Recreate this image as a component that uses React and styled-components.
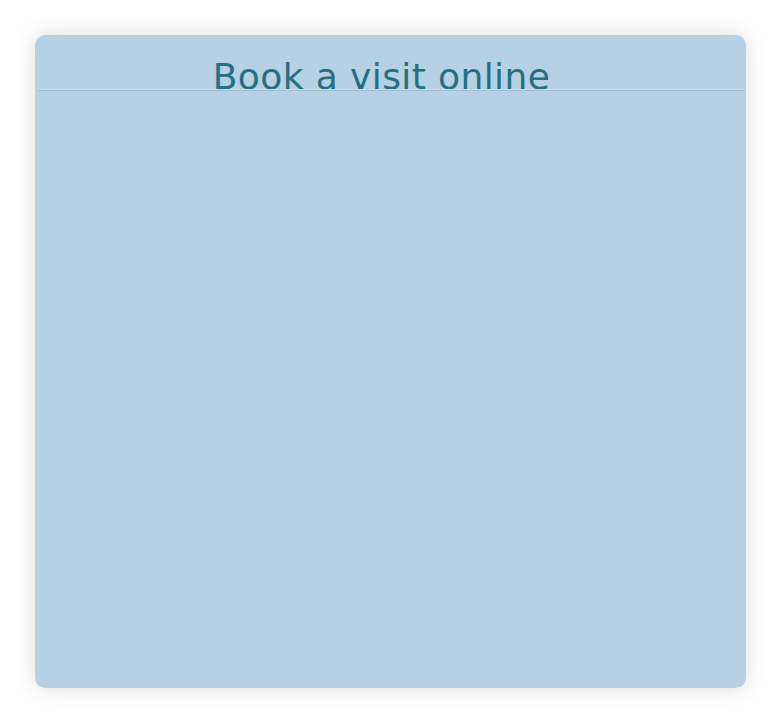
import React from "react";
import styled, { createGlobalStyle } from "styled-components";

const GlobalStyle = createGlobalStyle`
  html, body {
    margin: 0;
    padding: 0;
    background: #ffffff;
    font-family: "DejaVu Sans", Verdana, sans-serif;
  }
`;

const Page = styled.main`
  box-sizing: border-box;
  height: 100vh;
  padding: 35px;
`;

const Card = styled.section`
  height: 100%;
  background: #b7d1e4;
  border-radius: 10px;
  box-shadow: 0 0 22px rgba(0, 0, 0, 0.14);
  display: flex;
  flex-direction: column;
`;

const Header = styled.header`
  box-sizing: border-box;
  height: 54px;
  padding: 27px 18px 0 0;
  text-align: center;
`;

const Title = styled.h1`
  margin: 0;
  font-size: 36px;
  line-height: 30px;
  letter-spacing: 0.4px;
  font-weight: normal;
  color: #24707f;
`;

const Divider = styled.hr`
  margin: 0 2px 0 3px;
  border: none;
  border-top: 1px solid #c6dcec;
  border-bottom: 1px solid #a3bdd0;
  height: 0;
`;

const Body = styled.div`
  flex: 1;
`;

export default function App() {
  return (
    <>
      <GlobalStyle />
      <Page>
        <Card>
          <Header>
            <Title>Book a visit online</Title>
          </Header>
          <Divider />
          <Body />
        </Card>
      </Page>
    </>
  );
}
